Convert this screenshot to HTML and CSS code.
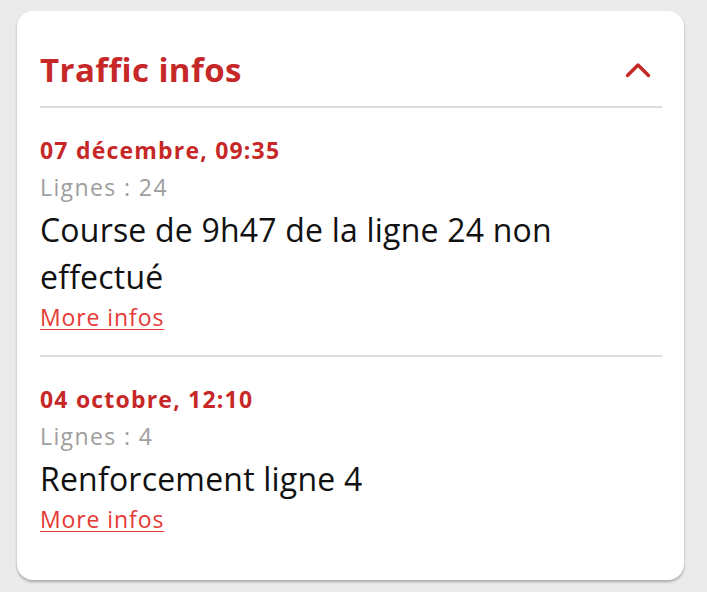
FILE: index.html
```html
<!DOCTYPE html>
<html lang="fr">
<head>
<meta charset="utf-8">
<link rel="stylesheet" href="styles.css">
</head>
<body>
<section class="card">
  <header class="card-header">
    <h2 class="title">Traffic infos</h2>
    <svg class="chevron" width="26" height="16" viewBox="0 0 26 16"><path d="M2.5 13.5 L13 3 L23.5 13.5" fill="none" stroke="#c62828" stroke-width="3.4" stroke-linecap="round" stroke-linejoin="round"/></svg>
  </header>
  <article class="item">
    <div class="date">07 décembre, 09:35</div>
    <div class="lines">Lignes : 24</div>
    <p class="msg">Course de 9h47 de la ligne 24 non effectué</p>
    <a class="more" href="#">More infos</a>
  </article>
  <article class="item">
    <div class="date">04 octobre, 12:10</div>
    <div class="lines">Lignes : 4</div>
    <p class="msg">Renforcement ligne 4</p>
    <a class="more" href="#">More infos</a>
  </article>
</section>
</body>
</html>
```
FILE: styles.css
```css
html, body {
  margin: 0;
  padding: 0;
}
body {
  background: #ebebeb;
  font-family: "Open Sans", "Noto Sans", sans-serif;
  padding: 11px 23px 0 17px;
  height: 592px;
  box-sizing: border-box;
}
.card {
  background: #fff;
  border-radius: 16px;
  box-shadow: 0 2px 3px rgba(0,0,0,0.28);
  padding: 0 22px 0 23px;
  height: 569px;
  box-sizing: border-box;
}
.card-header {
  display: flex;
  align-items: center;
  justify-content: space-between;
  height: 97px;
  padding-top: 23px;
  box-sizing: border-box;
  border-bottom: 2px solid #dddddd;
}
.title {
  margin: 0;
  font-size: 33px;
  line-height: 40px;
  font-weight: 700;
  letter-spacing: 0.4px;
  color: #c62828;
}
.chevron {
  margin-right: 11px;
}
.item {
  padding: 24px 0 21px;
  border-bottom: 2px solid #dddddd;
}
.item:last-child {
  border-bottom: none;
}
.date {
  font-size: 23px;
  font-weight: 700;
  letter-spacing: 1.2px;
  color: #c62828;
  line-height: 36px;
}
.lines {
  font-size: 23px;
  letter-spacing: 1.4px;
  color: #9e9e9e;
  line-height: 38px;
}
.msg {
  margin: 0;
  font-size: 32px;
  letter-spacing: 0.2px;
  color: #111;
  line-height: 47px;
}
.more {
  display: inline-block;
  font-size: 23px;
  letter-spacing: 0.9px;
  color: #e53935;
  line-height: 34px;
  text-decoration: underline;
  text-decoration-thickness: 1px;
  text-underline-offset: 3px;
}
```
